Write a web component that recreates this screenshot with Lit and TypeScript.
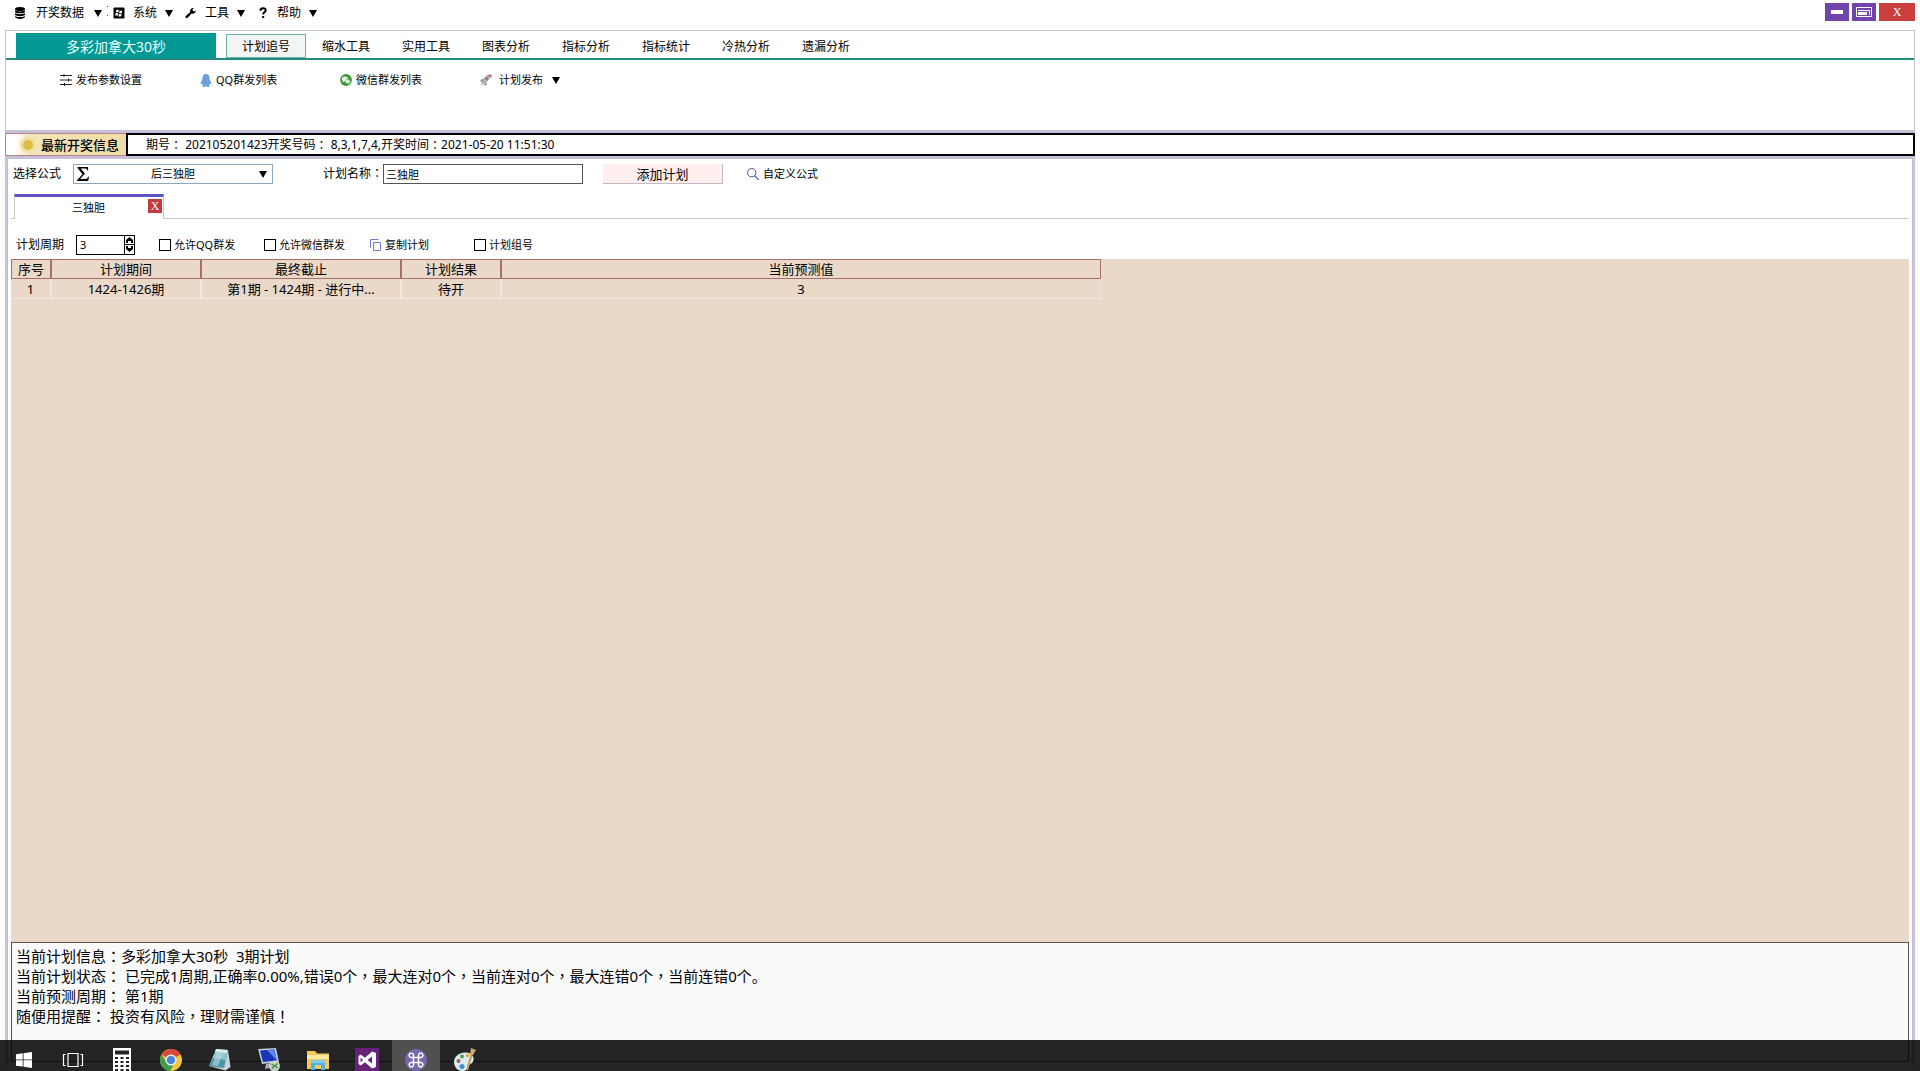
import { LitElement, html, css, svg } from "lit";
import { customElement, state } from "lit/decorators.js";

const icons = {
  database: svg`<svg class="ico" width="12" height="12" viewBox="0 0 12 12">
    <ellipse cx="6" cy="2" rx="5" ry="2"/><path d="M1 3.300c1 1.500 9 1.500 10 0v1.600c-1 1.900-9 1.900-10 0zM1 6.100c1 1.500 9 1.500 10 0v1.600c-1 1.900-9 1.900-10 0zM1 8.900c1 1.500 9 1.500 10 0v1.200c-1 2.400-9 2.400-10 0z"/></svg>`,
  system: svg`<svg class="ico" width="12" height="12" viewBox="0 0 12 12">
    <rect x="0.500" y="0.500" width="11" height="11" rx="1"/>
    <path d="M3.200 3.200c.9-.6 1.800-.6 2.600-.1L5.300 5.500c-.8-.4-1.600-.4-2.500.1zM6.600 3.400c.9.500 1.700.5 2.700 0l-.5 2.500c-.9.500-1.800.5-2.700 0zM2.600 6.500c.9-.6 1.700-.6 2.500-.1l-.5 2.400c-.8-.4-1.600-.4-2.500.1zM5.900 6.700c.9.500 1.800.5 2.700 0l-.5 2.500c-.9.500-1.800.5-2.700 0z" fill="#fff"/></svg>`,
  wrench: svg`<svg class="ico" width="12" height="12" viewBox="0 0 12 12">
    <path d="M11 3.400A3.300 3.300 0 0 1 6.700 6.500L2.600 10.800a1.200 1.200 0 0 1-1.800-1.700L5.200 5A3.200 3.200 0 0 1 8.900 1L7.500 2.600l.5 1.500 1.600.3z"/></svg>`,
  help: svg`<svg class="ico" width="12" height="12" viewBox="0 0 12 12">
    <path d="M3.400 3.800C3.400 1.800 4.600 1.300 6 1.300s2.700.7 2.700 2.200C8.700 5.200 6.200 5 6.200 7.500" fill="none" stroke="#000" stroke-width="2"/><rect x="5.200" y="9" width="2" height="2"/></svg>`,
  sliders: svg`<svg class="ico" width="12" height="12" viewBox="0 0 12 12">
    <path d="M0 1.500h12M0 6h12M0 10.500h12M4 0v3M8.500 4.500v3M4.500 9v3" fill="none" stroke="#222"/></svg>`,
  qq: svg`<svg class="ico" width="12" height="13" viewBox="0 0 12 12" preserveAspectRatio="none">
    <path d="M6 0C3.700 0 2.400 1.700 2.400 4v1C1.200 6.600.2 8.400.6 9.400c.3.500.9 0 1.400-.6.200.8.500 1.300 1 1.700-1.300.6-.6 1.500.8 1.500.9 0 1.700-.3 2.200-.6.500.3 1.300.6 2.200.6 1.400 0 2.100-.9.800-1.500.5-.4.800-.9 1-1.700.5.600 1.100 1.100 1.400.6.400-1-.6-2.800-1.800-4.400V4C9.600 1.700 8.300 0 6 0z" fill="#6aa3da"/></svg>`,
  wechat: svg`<svg class="ico" width="12" height="12" viewBox="0 0 13 13">
    <circle cx="6.500" cy="6.500" r="6.400" fill="#3a9c32"/><ellipse cx="5.300" cy="5.400" rx="3.100" ry="2.600" fill="#fff"/><path d="M3 7l-.2 2 2-1.200z" fill="#fff"/>
    <ellipse cx="8.300" cy="7.900" rx="2.800" ry="2.300" fill="#fff" stroke="#3a9c32" stroke-width=".6"/><path d="M9.500 9.500l1 1.400-2.200-.8z" fill="#fff"/>
    <g fill="#3a9c32"><circle cx="4.200" cy="4.800" r=".5"/><circle cx="6.300" cy="4.800" r=".5"/><circle cx="7.400" cy="7.400" r=".45"/><circle cx="9.200" cy="7.400" r=".45"/></g></svg>`,
  rocket: svg`<svg class="ico" width="12" height="12" viewBox="0 0 12 12">
    <path d="M3 5 1 5.500.3 7.500l2 .2zM7 9l-.5 2-2 .7-.3-2z" fill="#888"/><path d="M2.500 8C3 5 6 1.500 9.500 1c.5 3.500-2.500 7-6 8.200z" fill="#b9bcbd" stroke="#7b7b7b" stroke-width=".7"/>
    <path d="M8 1.200 11.700.3 11 4z" fill="#c6586c"/><circle cx="6.700" cy="4.700" r="1.200" fill="#7a6a60"/><path d="M2.300 8.500.6 11.400l3-1.600z" fill="#8aa49a"/></svg>`,
  sigma: svg`<svg class="ico" width="12" height="14" viewBox="0 0 12 14">
    <path d="M.5 0h10.300l.5 3.600h-.9C10 1.900 9.400 1.400 7.700 1.400H3.600L7.900 6.600 3.200 11.900h4.900c1.700 0 2.500-.6 3-2.200h.9L11.200 14H0v-.8L5.500 7.200.5.900z"/></svg>`,
  search: svg`<svg class="ico" width="12" height="12" viewBox="0 0 12 12"><circle cx="4.700" cy="4.700" r="4.100" fill="none" stroke="#4c5196"/><path d="M7.800 7.800 11.700 11.700" stroke="#4c5196" stroke-width="1.200"/></svg>`,
  copy: svg`<svg class="ico" width="12" height="12" viewBox="0 0 12 12"><path d="M.5 8.500v-8h8M3.500 3.500h7v8h-7z" fill="none" stroke="#7b78cf"/></svg>`,
};

const taskIcons = [
  { name: "开始", art: svg`<path d="M4 6.200 10.700 5.300v6.200H4zM11.500 5.200 20 4v7.500h-8.500zM4 12.300h6.700v6.300L4 17.700zM11.500 12.300H20V20l-8.500-1.200z" fill="#fff"/>` },
  { name: "任务视图", art: svg`<path d="M7 5.500h10v13H7zM4.500 6.500h-2v11h2M19.500 6.500h2v11h-2" fill="none" stroke="#fff" stroke-width="1.200"/>` },
  { name: "计算器", art: svg`<path d="M3 0h18v24H3z" fill="#fff"/><path d="M5 2.500h14v4H5z" fill="#222"/><g fill="#222"><path d="M5 9h3v2H5zM10.500 9h3v2h-3zM16 9h3v2h-3zM5 13h3v2H5zM10.500 13h3v2h-3zM16 13h3v2h-3zM5 17h3v2H5zM10.500 17h3v2h-3zM16 17h3v2h-3zM5 21h3v2H5zM10.500 21h3v2h-3zM16 21h3v2h-3z"/></g>` },
  { name: "Chrome", art: svg`<circle cx="12" cy="12" r="11" fill="#f3c63c"/><path d="M12 12 2.500 6.500A11 11 0 0 1 21.500 6.500z" fill="#d9493a"/><path d="M12 1a11 11 0 0 1 9.500 5.500H12z" fill="#d9493a"/><path d="M2.500 6.500A11 11 0 0 0 11 23l5-8.500-8.500 0z" fill="#3f9b4e"/><circle cx="12" cy="12" r="5.500" fill="#fff"/><circle cx="12" cy="12" r="4.300" fill="#4b86dc"/>` },
  { name: "记事本", art: svg`<path d="M8 1 20 2 16 20 1 18z" fill="#8fc3d0"/><path d="M8 1 20 2 19 5 7 4z" fill="#dcebee"/><path d="M5 10 18 12 16 20 1 18z" fill="#4f93a6"/><path d="M9 4l6 1-5 13-6-1z" fill="#b5dce4" opacity=".6"/><path d="M1 18l15 2 4-18 2.500 17-5 3.500z" fill="#c9d3d6"/>` },
  { name: "远程桌面", art: svg`<path d="M1 1 19 0 22 14 5 16z" fill="#c3cbe0"/><path d="M3 2.500 17.500 1.500 20 12.500 6 14z" fill="#1b37b8"/><path d="M10 2l7.500-.5L20 12.500z" fill="#5f86e8"/><path d="M9 16l6-1 2 4-9 2z" fill="#a8aebd"/><circle cx="17.500" cy="18" r="5.500" fill="#c5d2c5"/><path d="m14.500 16 3 2-2.500 2.500M20.500 15.500l-2.500 2 2.500 2.500" fill="none" stroke="#3f8a49" stroke-width="1.300"/>` },
  { name: "文件资源管理器", art: svg`<path d="M1 3h8l2 2.500h12V21H1z" fill="#f1c95c"/><path d="M1 7h22v4H1z" fill="#fbe7a0"/><path d="M5 12h14v10h-4v-5H9v5H5z" fill="#4fb2df"/><path d="M5 12h14v3H5z" fill="#83cdea"/>` },
  { name: "Visual Studio", art: svg`<path d="M0 0h24v24H0z" fill="#68217a"/><path d="m17 3.500 4 1.600v13.800l-4 1.600-7-6.300-4.200 3.200L3.500 16V8l2.300-1.400L10 9.800zM17 8.500 12.500 12l4.500 3.500zM5.500 9.700v4.600L8 12z" fill="#fff" fill-rule="evenodd"/>` },
  { name: "多彩计划", art: svg`<circle cx="12" cy="12" r="11" fill="#7567ad"/><path d="M9.500 9.500h5v5h-5zM9.500 9.500H7.700A2.200 2.200 0 1 1 9.500 7.500zM14.500 9.500V7.500a2.200 2.200 0 1 1 2 2zM14.500 14.500h2a2.200 2.200 0 1 1-2 2zM9.500 14.500v2a2.200 2.200 0 1 1-2-2z" fill="none" stroke="#fff" stroke-width="1.500"/>` },
  { name: "画图", art: svg`<path d="M1 14C1 8 7 4 13 4.500c6 .5 9 5 7 9-1.500 3-4 2-4.500 5-.4 3-3 4.500-6.500 4.500-4 0-8-4-8-9z" fill="#dcebf0"/><circle cx="5.500" cy="13" r="2" fill="#a8584c"/><circle cx="9" cy="8.500" r="2" fill="#5c9c50"/><circle cx="14.500" cy="7.500" r="1.800" fill="#dcae3c"/><circle cx="9" cy="18.500" r="2.500" fill="#3f8fd0"/><path d="m20 2-6 20" stroke="#c79a5e" stroke-width="2.200"/><path d="m18 0 5 2-3 5-3-1z" fill="#c9a878"/>` },
];

const arrow = html`<span class="arrow" aria-hidden="true"></span>`;

/** Sets full-width colons, commas and exclamation marks in the centre of their cell. */
const centred = (text: string) =>
  text.split(/([：，！])/).map((part) => (/^[：，！]$/.test(part) ? html`<span class="mark">${part}</span>` : part));

@customElement("app-root")
export class AppRoot extends LitElement {
  @state() private period = 3;

  static styles = css`
    :host {
      display: block;
      position: relative;
      min-height: 100vh;
      overflow: hidden;
      background: #fff;
      color: #000;
      font: 12px/16px "Noto Sans", "Noto Sans CJK SC", sans-serif;
    }
    * { box-sizing: border-box; }
    button, input, select { font: inherit; color: inherit; margin: 0; padding: 0; border: 0; border-radius: 0; background: none; }
    .page { display: flex; flex-direction: column; min-height: 100vh; padding: 0 5px 6px; }
    .ico { display: block; flex: none; }
    .mark { font-family: "Noto Sans CJK TC", sans-serif; line-height: 1; }
    .arrow { width: 0; height: 0; border: 4px solid transparent; border-top: 7px solid #000; border-bottom: 0; }

    .titlebar { display: flex; justify-content: space-between; height: 30px; padding-left: 9px; }
    .menu { display: flex; height: 26px; }
    .menu button { display: flex; align-items: center; gap: 8px; padding-right: 12px; }
    .menu .first { gap: 10px; padding-right: 5px; }
    .grip { width: 1px; height: 10px; margin: 6px 5px 0 0; border-top: 1px solid #555; border-bottom: 1px solid #555; }
    .window { display: flex; gap: 3px; padding-top: 3px; }
    .window button { display: flex; align-items: center; justify-content: center; width: 24px; height: 18px; background: #7044ab; }
    .window .close { width: 36px; background: #cb3e3e; color: #fff; font: 12px "Liberation Serif", serif; }

    .ribbon { border: 1px solid #c5c2dc; border-bottom: 0; height: 100px; }
    .tabs { display: flex; align-items: flex-end; height: 29px; padding-left: 10px; border-bottom: 2px solid #24897e; }
    .tabs button { width: 80px; height: 24px; padding-top: 2px; border: 1px solid transparent; }
    .tabs .brand { width: 200px; height: 25px; margin-right: 10px; background: #029894; color: #e8ffff; font-size: 14px; }
    .tabs .active { background: #f3f5f5; border-color: #67b5ad; }
    .tools { display: flex; padding: 12px 54px; font-size: 11px; }
    .tools button { display: flex; align-items: center; gap: 4px; width: 140px; height: 16px; }
    .tools .wide { gap: 7px; }
    .tools .arrow { margin-left: 2px; }

    .news { display: flex; height: 29px; border: 3px solid #c6c1db; border-width: 3px 0; }
    .news-title { display: flex; align-items: center; gap: 5px; width: 121px; padding-left: 14px; border: 1px solid #b98287; border-right: 0;
      background: linear-gradient(90deg, #fff 8px, #f3e4bb 24px, #efdca4); font-size: 13px; font-weight: 500; margin: 0; white-space: nowrap; }
    .dot { width: 16px; height: 16px; border-radius: 8px; background: #dcbc42; border: 3px solid #f1e0a4; flex: none; }
    .news-text { display: flex; align-items: center; flex: 1; margin: 0; padding-left: 18px; border: 2px solid #000; white-space: pre; }

    .work { display: flex; flex-direction: column; flex: 1; border: 3px solid #c6c1db; border-width: 0 3px; padding: 5px 3px 3px; }
    .formula { display: flex; align-items: center; height: 20px; padding-left: 2px; }
    .select { display: grid; grid-template-columns: 14px 1fr 10px; align-items: center; width: 200px; height: 20px; margin: 0 50px 0 12px; padding: 0 3px; border: 1px solid #8aa9c0; }
    .select > * { grid-row: 1; }
    .select select { grid-column: 1 / -1; height: 18px; appearance: none; text-align: center; text-align-last: center; font-size: 11px; }
    .select .ico { grid-column: 1; }
    .select .arrow { grid-column: 3; }
    .name { width: 200px; height: 20px; padding: 0 2px; border: 1px solid #555; font-size: 11px; }
    .add { width: 120px; height: 20px; margin: 0 24px 0 20px; background: #ffeeee; border-right: 1px solid #c9b9bf; border-bottom: 1px solid #c9b9bf; font-size: 13px; }
    .custom { display: flex; align-items: center; gap: 4px; font-size: 11px; }

    .plans { display: flex; height: 35px; padding: 10px 0 0 3px; border-bottom: 1px solid #c6c6c6; }
    .plan { display: flex; width: 150px; height: 25px; border: 1px solid #c6c6c6; border-top: 3px solid #6152c4; border-bottom: 0; background: #fff; }
    .plan .pick { flex: 1; padding-left: 14px; font-size: 11px; }
    .plan .x { width: 14px; height: 14px; margin: 2px 1px 0 0; background: #c23b41; color: #fff; font: 12px/14px "Liberation Serif", serif; }

    .options { display: flex; align-items: center; height: 40px; padding: 11px 0 0 5px; font-size: 11px; }
    .options .cycle { font-size: 12px; }
    .spin { display: flex; width: 59px; height: 20px; margin: 0 24px 0 12px; border: 1px solid #000; }
    .spin input { flex: 1; min-width: 0; padding-left: 3px; appearance: textfield; }
    .spin input::-webkit-inner-spin-button { display: none; }
    .steps { display: flex; flex-direction: column; width: 10px; border-left: 1px solid #000; }
    .steps button { display: flex; align-items: center; justify-content: center; flex: 1; }
    .steps button + button { border-top: 1px solid #000; }
    .options label { display: flex; align-items: center; gap: 3px; }
    .options .qq { width: 105px; }
    .options .wx { width: 106px; }
    .options input[type="checkbox"] { appearance: none; width: 12px; height: 12px; border: 1px solid #000; }
    .options input[type="checkbox"]:checked { background: #000; }
    .copy { display: flex; align-items: center; gap: 3px; width: 104px; }

    .grid { flex: 1; background: #ead9c9; }
    table { border-collapse: separate; border-spacing: 0; table-layout: fixed; width: 1090px; font-size: 13px; }
    th, td { height: 20px; padding: 0; font-weight: 400; text-align: center; line-height: 18px; }
    th { border: 1px solid #a86f68; border-width: 1px 2px 1px 0; }
    td { border: 1px solid #f4e6da; border-width: 0 2px 1px 0; }
    th:first-child { border-left-width: 1px; }
    th:last-child, td:last-child { border-right-width: 1px; }
    .c1 { width: 41px; } .c2 { width: 150px; } .c3 { width: 200px; } .c4 { width: 100px; }

    .info { height: 120px; padding: 3px 4px; border: 1px solid #5a5555; background: #fafafa; font-size: 15px; line-height: 20px; }
    .info p { margin: 0; white-space: pre-wrap; }

    .taskbar { position: absolute; left: 0; right: 0; bottom: 0; display: flex; height: 31px; overflow: hidden; background: rgba(4, 4, 4, 0.87); }
    .taskbar button { display: flex; align-items: center; justify-content: center; width: 48px; height: 40px; margin-right: 1px; }
    .taskbar .on { background: #505050; }
  `;

  private menuItem(icon: unknown, text: string, cls = "") {
    return html`<button class=${cls}>${icon}<span>${text}</span>${arrow}</button>`;
  }

  private check(cls: string, text: string) {
    return html`<label class=${cls}><input type="checkbox" />${text}</label>`;
  }

  render() {
    return html`
      <div class="page">
        <header class="titlebar">
          <nav class="menu">
            ${this.menuItem(icons.database, "开奖数据", "first")}
            <span class="grip"></span>
            ${this.menuItem(icons.system, "系统")}
            ${this.menuItem(icons.wrench, "工具")}
            ${this.menuItem(icons.help, "帮助")}
          </nav>
          <div class="window">
            <button aria-label="最小化"><svg width="12" height="4"><rect width="12" height="4" fill="#fff"/></svg></button>
            <button aria-label="还原"><svg width="16" height="10"><path d="M.5.500h15v9H.5zM2 3.500h11.500V8" fill="none" stroke="#fff"/><rect x="2" y="5" width="9" height="3" fill="#fff"/></svg></button>
            <button class="close">X</button>
          </div>
        </header>

        <section class="ribbon">
          <nav class="tabs">
            <button class="brand">多彩加拿大30秒</button>
            ${["计划追号", "缩水工具", "实用工具", "图表分析", "指标分析", "指标统计", "冷热分析", "遗漏分析"].map(
              (t, i) => html`<button class=${i === 0 ? "active" : ""}>${t}</button>`
            )}
          </nav>
          <div class="tools">
            <button>${icons.sliders}发布参数设置</button>
            <button>${icons.qq}QQ群发列表</button>
            <button>${icons.wechat}微信群发列表</button>
            <button class="wide">${icons.rocket}计划发布${arrow}</button>
          </div>
        </section>

        <section class="news">
          <h2 class="news-title"><span class="dot"></span>最新开奖信息</h2>
          <p class="news-text">${centred("期号： 202105201423开奖号码： 8,3,1,7,4,开奖时间：2021-05-20 11:51:30")}</p>
        </section>

        <main class="work">
          <div class="formula">
            <label for="formula">选择公式</label>
            <span class="select">
              ${icons.sigma}
              <select id="formula"><option>后三独胆</option></select>
              ${arrow}
            </span>
            <label for="name">${centred("计划名称：")}</label>
            <input class="name" id="name" type="text" value="三独胆" />
            <button class="add">添加计划</button>
            <button class="custom">${icons.search}自定义公式</button>
          </div>

          <div class="plans">
            <div class="plan">
              <button class="pick">三独胆</button>
              <button class="x">X</button>
            </div>
          </div>

          <div class="options">
            <label class="cycle" for="cycle">计划周期</label>
            <span class="spin">
              <input id="cycle" type="number" .value=${String(this.period)} />
              <span class="steps">
                <button aria-label="增加" @click=${() => this.period++}><svg width="7" height="6"><path d="M3.500 0 7 3v3H5V4H2v2H0V3z"/></svg></button>
                <button aria-label="减少" @click=${() => this.period--}><svg width="7" height="6"><path d="M3.500 6 7 3V0H5v2H2V0H0v3z"/></svg></button>
              </span>
            </span>
            ${this.check("qq", "允许QQ群发")}
            ${this.check("wx", "允许微信群发")}
            <button class="copy">${icons.copy}复制计划</button>
            ${this.check("group", "计划组号")}
          </div>

          <div class="grid">
            <table>
              <thead>
                <tr><th class="c1">序号</th><th class="c2">计划期间</th><th class="c3">最终截止</th><th class="c4">计划结果</th><th>当前预测值</th></tr>
              </thead>
              <tbody>
                <tr><td>1</td><td>1424-1426期</td><td>第1期 - 1424期 - 进行中...</td><td>待开</td><td>3</td></tr>
              </tbody>
            </table>
          </div>

          <section class="info">
            <p>${centred("当前计划信息：多彩加拿大30秒  3期计划")}</p>
            <p>${centred("当前计划状态： 已完成1周期,正确率0.00%,错误0个，最大连对0个，当前连对0个，最大连错0个，当前连错0个。")}</p>
            <p>${centred("当前预测周期： 第1期")}</p>
            <p>${centred("随便用提醒： 投资有风险，理财需谨慎！")}</p>
          </section>
        </main>
      </div>

      <footer class="taskbar">
        ${taskIcons.map(
          (t, i) => html`<button class=${i === 8 ? "on" : ""} aria-label=${t.name}>
            <svg width="24" height="24" viewBox="0 0 24 24">${t.art}</svg>
          </button>`
        )}
      </footer>
    `;
  }
}
